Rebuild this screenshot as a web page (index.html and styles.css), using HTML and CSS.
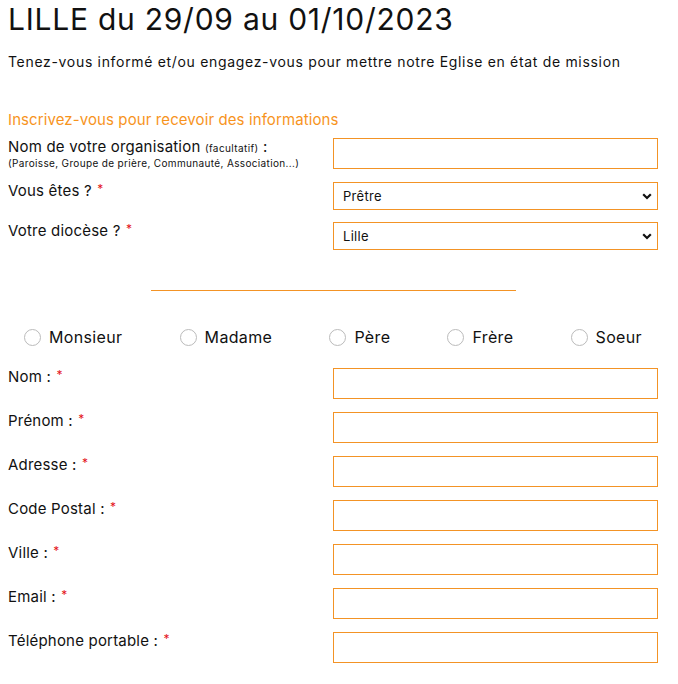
FILE: index.html
```html
<!DOCTYPE html>
<html lang="fr">
<head>
  <meta charset="UTF-8" />
  <meta name="viewport" content="width=device-width, initial-scale=1.0"/>
  <title>LILLE du 29/09 au 01/10/2023</title>
  <link rel="stylesheet" href="styles.css">
</head>
<body>

  <div class="page">
    <h1>LILLE du 29/09 au 01/10/2023</h1>
    <p class="intro">Tenez-vous informé et/ou engagez-vous pour mettre notre Eglise en état de mission</p>

    <h2>Inscrivez-vous pour recevoir des informations</h2>

    <form id="inscription">
      <div class="row row-first">
        <label for="organisation">Nom de votre organisation <small>(facultatif)</small> :
          <span class="hint">(Paroisse, Groupe de prière, Communauté, Association...)</span>
        </label>
        <input class="field" type="text" id="organisation" />
      </div>

      <div class="row row-select">
        <label for="statut">Vous êtes ? <span class="req">*</span></label>
        <div class="select-wrap">
          <select id="statut">
            <option>Prêtre</option>
            <option>Diacre</option>
            <option>Religieux / Religieuse</option>
            <option>Laïc</option>
          </select>
          <svg class="chevron" width="10" height="7" viewBox="0 0 10 7"><path d="M1.2 1.2 L5 5 L8.8 1.2" fill="none" stroke="#111" stroke-width="2.2"/></svg>
        </div>
      </div>

      <div class="row row-select">
        <label for="diocese">Votre diocèse ? <span class="req">*</span></label>
        <div class="select-wrap">
          <select id="diocese">
            <option>Lille</option>
            <option>Arras</option>
            <option>Cambrai</option>
          </select>
          <svg class="chevron" width="10" height="7" viewBox="0 0 10 7"><path d="M1.2 1.2 L5 5 L8.8 1.2" fill="none" stroke="#111" stroke-width="2.2"/></svg>
        </div>
      </div>

      <hr />

      <div class="civilite">
        <label class="radio"><input type="radio" name="civilite" /> <span>Monsieur</span></label>
        <label class="radio"><input type="radio" name="civilite" /> <span>Madame</span></label>
        <label class="radio"><input type="radio" name="civilite" /> <span>Père</span></label>
        <label class="radio"><input type="radio" name="civilite" /> <span>Frère</span></label>
        <label class="radio"><input type="radio" name="civilite" /> <span>Soeur</span></label>
      </div>

      <div class="row">
        <label for="nom">Nom : <span class="req">*</span></label>
        <input class="field" type="text" id="nom" />
      </div>
      <div class="row">
        <label for="prenom">Prénom : <span class="req">*</span></label>
        <input class="field" type="text" id="prenom" />
      </div>
      <div class="row">
        <label for="adresse">Adresse : <span class="req">*</span></label>
        <input class="field" type="text" id="adresse" />
      </div>
      <div class="row">
        <label for="cp">Code Postal : <span class="req">*</span></label>
        <input class="field" type="text" id="cp" />
      </div>
      <div class="row">
        <label for="ville">Ville : <span class="req">*</span></label>
        <input class="field" type="text" id="ville" />
      </div>
      <div class="row">
        <label for="email">Email : <span class="req">*</span></label>
        <input class="field" type="email" id="email" />
      </div>
      <div class="row">
        <label for="tel">Téléphone portable : <span class="req">*</span></label>
        <input class="field" type="tel" id="tel" />
      </div>
    </form>
  </div>

</body>
</html>
```

FILE: styles.css
```css
body {
  font-family: Inter, "Noto Sans", sans-serif;
  color: #111;
  background-color: #fff;
  margin: 0;
  padding: 0 8px;
}
.page {
  width: 650px;
}
h1 {
  font-size: 30px;
  font-weight: 400;
  line-height: 36px;
  margin: 1px 0 0;
  letter-spacing: 0.75px;
}
.intro {
  font-size: 14px;
  line-height: 20px;
  letter-spacing: 0.68px;
  margin: 15px 0 0;
}
h2 {
  color: #f7941d;
  font-size: 15px;
  font-weight: 400;
  line-height: 20px;
  letter-spacing: 0.1px;
  margin: 38px 0 0;
}
.row {
  display: grid;
  grid-template-columns: 325px 325px;
  margin-top: 13px;
}
.row label {
  font-size: 15px;
  line-height: 18px;
  letter-spacing: 0.2px;
}
.row-first {
  margin-top: 8px;
}
.row small {
  font-size: 10px;
  letter-spacing: 0.4px;
}
.hint {
  display: block;
  font-size: 10px;
  line-height: 12px;
  letter-spacing: 0.35px;
}
.req {
  color: #e4131b;
  font-size: 12px;
  line-height: 0;
  margin-left: 1px;
  vertical-align: 3px;
}
.field {
  box-sizing: border-box;
  width: 325px;
  height: 31px;
  margin: 0;
  border: 1px solid #f39325;
  border-radius: 0;
  outline: none;
  background-color: #fff;
  padding: 4px 9px;
  font-family: inherit;
}
.row-select {
  margin-top: 12px;
}
.row-first + .row-select {
  margin-top: 13px;
}
.select-wrap {
  position: relative;
}
select {
  appearance: none;
  box-sizing: border-box;
  width: 325px;
  height: 28px;
  border: 1px solid #f39325;
  border-radius: 0;
  background-color: #fff;
  padding: 0 9px;
  font-family: inherit;
  font-size: 13px;
  letter-spacing: 0.3px;
  color: #111;
}
.chevron {
  position: absolute;
  right: 6px;
  top: 11px;
  pointer-events: none;
}
hr {
  width: 365px;
  margin: 40px auto 0;
  border: none;
  border-top: 1px solid #f39325;
}
.civilite {
  display: flex;
  justify-content: space-between;
  padding: 0 16px;
  margin-top: 36px;
  margin-bottom: 21px;
}
.radio {
  display: flex;
  align-items: center;
  gap: 8px;
  font-size: 16px;
  letter-spacing: 0.35px;
}
.radio input {
  appearance: none;
  width: 17px;
  height: 17px;
  margin: 0;
  border: 1px solid #bbb;
  border-radius: 50%;
}
.civilite + .row {
  margin-top: 0;
}
```
